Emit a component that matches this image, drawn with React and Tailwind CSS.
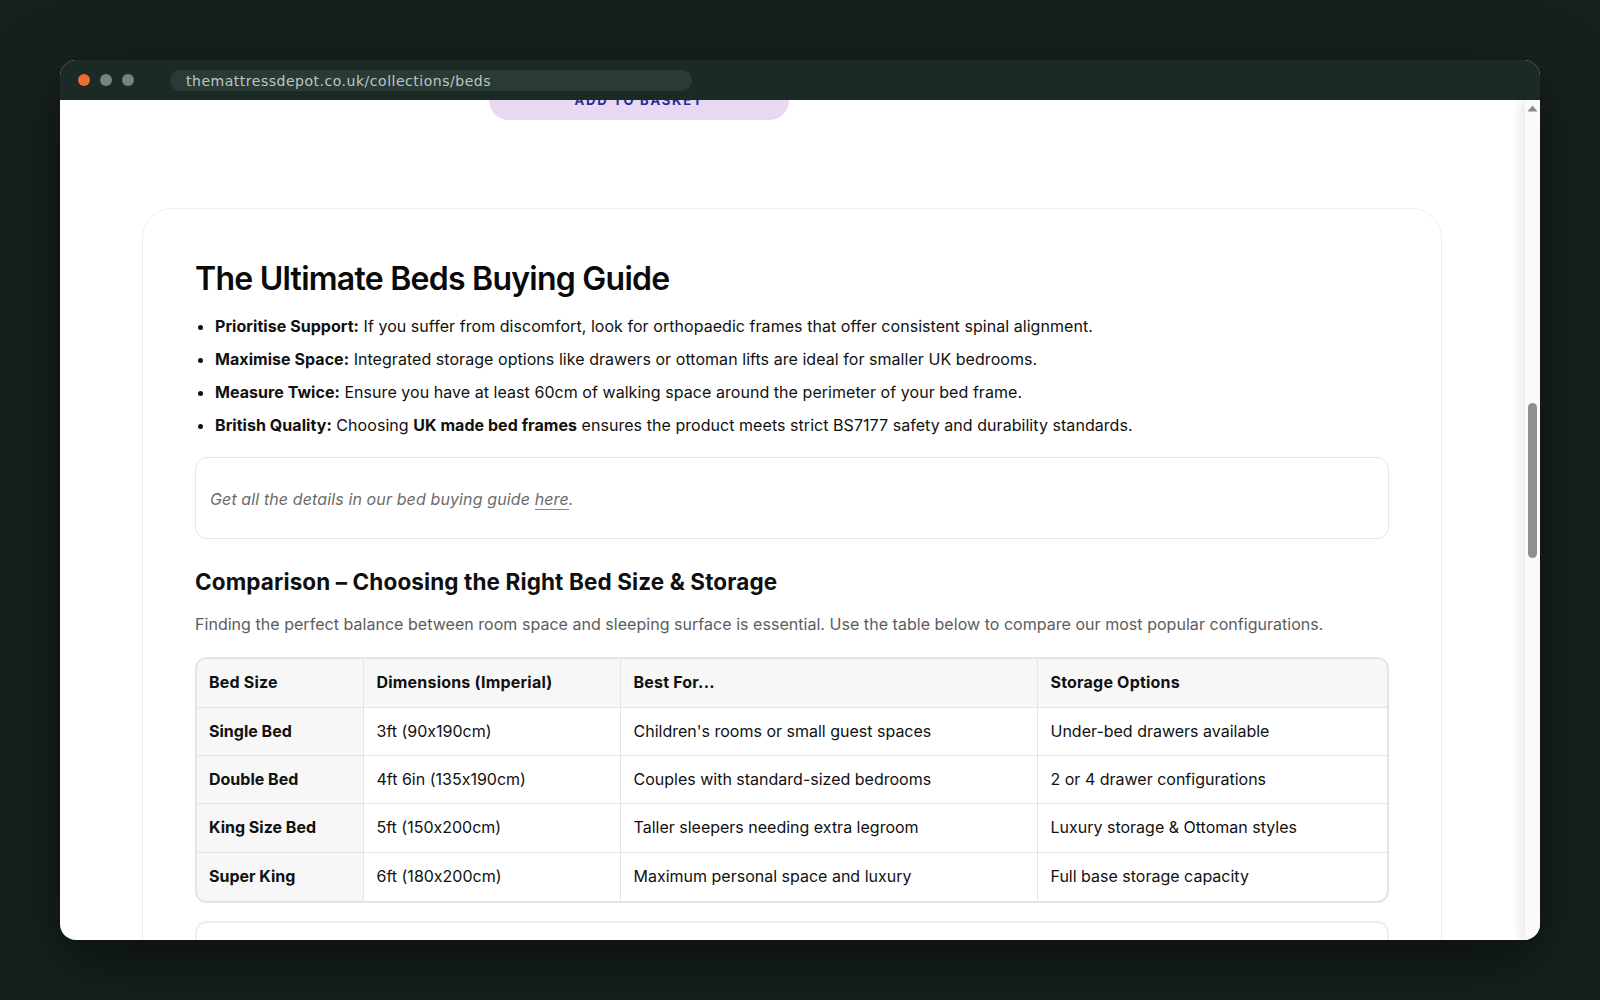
const rows = [
  ["Single Bed", "3ft (90x190cm)", "Children's rooms or small guest spaces", "Under-bed drawers available", "h-12"],
  ["Double Bed", "4ft 6in (135x190cm)", "Couples with standard-sized bedrooms", "2 or 4 drawer configurations", "h-12"],
  ["King Size Bed", "5ft (150x200cm)", "Taller sleepers needing extra legroom", "Luxury storage & Ottoman styles", "h-[49px]"],
  ["Super King", "6ft (180x200cm)", "Maximum personal space and luxury", "Full base storage capacity", "h-[49px]"],
];

const tips = [
  [<b key="a" className="font-bold">Prioritise Support:</b>, " If you suffer from discomfort, look for orthopaedic frames that offer consistent spinal alignment."],
  [<b key="a" className="font-bold">Maximise Space:</b>, " Integrated storage options like drawers or ottoman lifts are ideal for smaller UK bedrooms."],
  [<b key="a" className="font-bold">Measure Twice:</b>, " Ensure you have at least 60cm of walking space around the perimeter of your bed frame."],
  [<b key="a" className="font-bold">British Quality:</b>, " Choosing ", <b key="b" className="font-bold">UK made bed frames</b>, " ensures the product meets strict BS7177 safety and durability standards."],
];

export default function App() {
  return (
    <div className="h-[1000px] w-[1600px] overflow-hidden bg-[#16211e] pt-[60px] pl-[60px] font-['Inter',sans-serif] [font-feature-settings:'calt'_0]">
      <div className="flex h-[880px] w-[1480px] flex-col overflow-hidden rounded-2xl bg-white shadow-[0_20px_70px_rgba(0,0,0,0.55)]">
        {/* browser bar */}
        <div className="flex h-10 shrink-0 items-center bg-[#1c2a26] pl-[18px]">
          <div className="flex gap-[10px]">
            <span className="h-3 w-3 rounded-full bg-[#ea6c35]" />
            <span className="h-3 w-3 rounded-full bg-[#72857f]" />
            <span className="h-3 w-3 rounded-full bg-[#72857f]" />
          </div>
          <div className="ml-9 flex h-[21px] w-[522px] items-center rounded-full bg-[#2a3a35] px-4 pt-[2px] font-['DejaVu_Sans',sans-serif] text-[14px] tracking-[0.52px] text-[#bcc7c3]">
            themattressdepot.co.uk/collections/beds
          </div>
        </div>

        <div className="flex min-h-0 flex-1">
          <div className="min-w-0 flex-1 overflow-hidden">
            <div className="-mt-5 ml-[429px] flex h-10 w-[300px] items-center justify-center rounded-[20px] bg-[#e9d8f1] pt-[2px] text-[13px] font-bold tracking-[1.8px] text-[#232f8f]">
              ADD TO BASKET
            </div>

            <div className="mt-[88px] ml-[82px] w-[1300px] rounded-[30px] border border-[#eeeeee] px-[52px] pt-[49px] pb-10 text-[16px] text-[#111]">
              <h1 className="text-[32px] leading-[42px] font-semibold tracking-[-0.75px] text-[#0a0a0a]">The Ultimate Beds Buying Guide</h1>

              <ul className="mt-[10px] list-disc pl-5 tracking-[0.05px]">
                {tips.map((t, i) => (
                  <li key={i} className="h-[33px] leading-[33px]">{t}</li>
                ))}
              </ul>

              <div className="mt-[15px] flex h-[82px] items-center rounded-xl border border-[#e6e6e6] px-[14px] pt-[2px] tracking-[0.12px] text-[#6b6b6b] italic">
                <p>
                  Get all the details in our bed buying guide <a className="border-b border-[#888]">here</a>.
                </p>
              </div>

              <h2 className="mt-[26px] text-[22.5px] leading-[34px] font-bold tracking-[0.11px] text-[#0f0f0f]">Comparison – Choosing the Right Bed Size &amp; Storage</h2>
              <p className="mt-[13px] leading-6 tracking-[0.035px] text-[#5c5c5c]">
                Finding the perfect balance between room space and sleeping surface is essential. Use the table below to compare our most popular configurations.
              </p>

              <div className="mt-[21px] overflow-hidden rounded-xl border-2 border-[#e4e4e4]">
                <table className="w-full table-fixed border-collapse text-left">
                  <colgroup>
                    <col className="w-[166px]" />
                    <col className="w-[257px]" />
                    <col className="w-[417px]" />
                    <col />
                  </colgroup>
                  <thead>
                    <tr className="h-[48px] bg-[#f7f7f7]">
                      {["Bed Size", "Dimensions (Imperial)", "Best For...", "Storage Options"].map((h, i) => (
                        <th key={h} className={`pr-[13px] pb-[2px] font-bold tracking-[0.2px] ${i === 0 ? "pl-3" : "pl-[13px]"} ${i < 3 ? "border-r border-[#e4e4e4]" : ""}`}>{h}</th>
                      ))}
                    </tr>
                  </thead>
                  <tbody>
                    {rows.map((r) => (
                      <tr key={r[0]} className={`${r[4]} border-t border-[#e4e4e4]`}>
                        <td className="border-r border-[#e4e4e4] bg-[#f7f7f7] pr-[13px] pb-[1px] pl-3 font-bold">{r[0]}</td>
                        <td className="border-r border-[#e4e4e4] px-[13px] pb-[1px]">{r[1]}</td>
                        <td className="border-r border-[#e4e4e4] px-[13px] pb-[1px]">{r[2]}</td>
                        <td className="px-[13px] pb-[1px]">{r[3]}</td>
                      </tr>
                    ))}
                  </tbody>
                </table>
              </div>

              <div className="mt-[18px] h-24 rounded-xl border-2 border-[#eeeeee]" />
            </div>
          </div>

          {/* scrollbar */}
          <div className="relative w-[15px] shrink-0 bg-[#fbfafb] shadow-[-4px_0_12px_rgba(0,0,0,0.1)]">
            <svg className="absolute top-[5px] left-[2px]" width="11" height="7" viewBox="0 0 11 7">
              <path d="M5.5 0.5 10.5 6.5H0.5Z" fill="#8a8a8a" />
            </svg>
            <div className="absolute top-[303px] left-[3px] h-[155px] w-[9px] rounded-[4.5px] bg-[#8f8f8f]" />
          </div>
        </div>
      </div>
    </div>
  );
}
